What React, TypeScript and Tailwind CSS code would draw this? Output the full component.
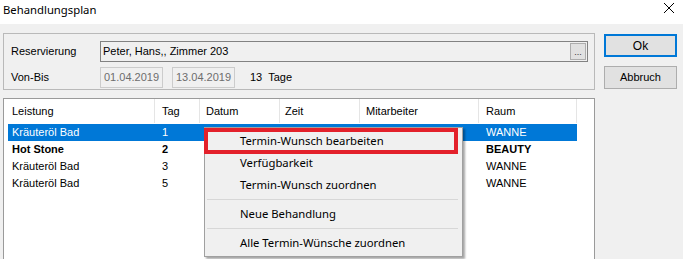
import React from "react";

const cols = [
  { label: "Leistung", w: "w-[151px]", pl: "pl-[8px]" },
  { label: "Tag", w: "w-[45px]", pl: "pl-[7px]" },
  { label: "Datum", w: "w-[80px]", pl: "pl-[6px]" },
  { label: "Zeit", w: "w-[80px]", pl: "pl-[5px]" },
  { label: "Mitarbeiter", w: "w-[119px]", pl: "pl-[6px]" },
  { label: "Raum", w: "w-[98px]", pl: "pl-[7px]" },
];

const rows = [
  { l: "Kräuteröl Bad", t: "1", r: "WANNE", sel: true, bold: false },
  { l: "Hot Stone", t: "2", r: "BEAUTY", sel: false, bold: true },
  { l: "Kräuteröl Bad", t: "3", r: "WANNE", sel: false, bold: false },
  { l: "Kräuteröl Bad", t: "5", r: "WANNE", sel: false, bold: false },
];

export default function App() {
  return (
    <div className="relative w-[683px] h-[259px] overflow-hidden bg-[#f0f0f0] font-['Liberation_Sans',Arial,sans-serif] text-[11px] text-black">
      {/* Title bar */}
      <div className="h-[24px] bg-white flex items-start justify-between pl-[3px] pr-[8px]">
        <div className="pt-[2px] font-['Noto_Sans',sans-serif] text-[11.3px] leading-[16px]">Behandlungsplan</div>
        <svg width="12" height="12" viewBox="0 0 12 12" className="mt-[2px]">
          <path d="M1 1 L11 11 M11 1 L1 11" stroke="#000" strokeWidth="1" />
        </svg>
      </div>

      {/* Body */}
      <div className="flex pl-[3px] pt-[9px]">
        <div className="w-[592px] flex flex-col">
          {/* Group box */}
          <div className="h-[57px] border border-[#b9b9b9] pl-[7px] pt-[7px] flex flex-col gap-[5px]">
            <div className="flex items-center h-[21px]">
              <div className="w-[89px] leading-[13px]">Reservierung</div>
              <div className="relative w-[488px] h-[21px] border border-[#828282] bg-[#f0f0f0] flex items-center pl-[2px]">
                <span>Peter, Hans,, Zimmer 203</span>
                <div className="absolute right-[1px] top-[1px] w-[16px] h-[17px] bg-[#e1e1e1] border border-[#adadad] flex items-end justify-center pb-[3px] text-[9px] leading-[8px] text-[#333]">
                  ...
                </div>
              </div>
            </div>
            <div className="flex items-center h-[21px]">
              <div className="w-[89px]">Von-Bis</div>
              <div className="w-[63px] h-[21px] border border-[#cccccc] flex items-center pl-[3px] text-[#6d6d6d]">01.04.2019</div>
              <div className="ml-[9px] w-[63px] h-[21px] border border-[#cccccc] flex items-center pl-[3px] text-[#6d6d6d]">13.04.2019</div>
              <div className="ml-[15px] whitespace-pre">13  Tage</div>
            </div>
          </div>

          {/* List view */}
          <div className="mt-[8px] h-[170px] border border-[#9a9a9a] bg-white">
            <div className="flex h-[25px]">
              {cols.map((c) => (
                <div key={c.label} className={`${c.w} ${c.pl} h-[24px] border-r border-[#e5e5e5] flex items-center`}>
                  {c.label}
                </div>
              ))}
            </div>
            {rows.map((r, i) => (
              <div
                key={i}
                className={`ml-[4px] w-[569px] h-[17px] flex items-center ${r.sel ? "bg-[#0078d7] text-white" : ""} ${r.bold ? "font-bold" : ""}`}
              >
                <div className="w-[147px] pl-[4px]">{r.l}</div>
                <div className="w-[45px] pl-[7px]">{r.t}</div>
                <div className="w-[80px]"></div>
                <div className="w-[80px]"></div>
                <div className="w-[119px]"></div>
                <div className="w-[98px] pl-[7px]">{r.r}</div>
              </div>
            ))}
          </div>
        </div>

        {/* Buttons */}
        <div className="ml-[9px] mt-[1px] flex flex-col gap-[9px]">
          <div className="w-[73px] h-[23px] bg-[#e1e1e1] border-2 border-[#0078d7] flex items-center justify-center text-[12px]">
            Ok
          </div>
          <div className="w-[73px] h-[23px] bg-[#e1e1e1] border border-[#adadad] flex items-center justify-center">
            Abbruch
          </div>
        </div>
      </div>

      {/* Context menu */}
      <div className="absolute left-[204px] top-[127px] w-[259px] bg-[#f0f0f0] border border-[#a0a0a0] shadow-[2px_2px_2px_rgba(0,0,0,0.35)] py-[2px] font-['Noto_Sans',sans-serif] text-[11.3px]">
        <div className="relative h-[22px] flex items-center pl-[35px]">Termin-Wunsch bearbeiten</div>
        <div className="h-[22px] flex items-center pl-[35px]">Verfügbarkeit</div>
        <div className="h-[22px] flex items-center pl-[35px]">Termin-Wunsch zuordnen</div>
        <div className="h-[7px] flex items-center pl-[2px] pr-[4px]">
          <div className="w-full h-px bg-[#d7d7d7]" />
        </div>
        <div className="h-[22px] flex items-center pl-[35px]">Neue Behandlung</div>
        <div className="h-[7px] flex items-center pl-[2px] pr-[4px]">
          <div className="w-full h-px bg-[#d7d7d7]" />
        </div>
        <div className="h-[22px] flex items-center pl-[35px]">Alle Termin-Wünsche zuordnen</div>
        <div className="absolute left-[-1px] top-0 w-[254px] h-[26px] border-4 border-[#e3212b]" />
      </div>
    </div>
  );
}
